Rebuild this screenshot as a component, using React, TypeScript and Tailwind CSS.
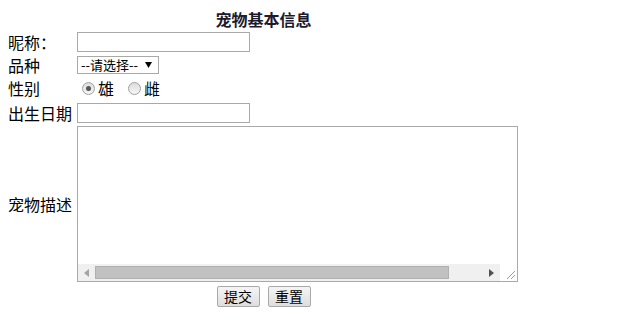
import React from "react";

const font = { fontFamily: '"Noto Sans CJK SC", "Liberation Sans", sans-serif' };

function Radio({ checked }: { checked?: boolean }) {
  return (
    <span className="w-[13px] h-[13px] rounded-full border border-[#a0a0a0] bg-gradient-to-b from-[#dcdcdc] to-[#f6f6f6] flex items-center justify-center">
      {checked && <span className="w-[5px] h-[5px] rounded-full bg-[#555]" />}
    </span>
  );
}

function Btn({ children }: { children: React.ReactNode }) {
  return (
    <div className="h-[21px] w-[43px] border border-[#a9a9a9] rounded-[2px] bg-gradient-to-b from-[#f5f5f5] to-[#dedede] flex items-center justify-center text-[14px] leading-none text-black">
      {children}
    </div>
  );
}

export default function App() {
  return (
    <div className="w-[627px] h-[334px] bg-white text-black" style={font}>
      <div className="w-[511px] ml-[8px] pt-[8px] flex flex-col">
        {/* Title */}
        <div className="h-[22px] flex items-center justify-center text-[16px] font-bold text-[#1c1a2c] leading-none">
          宠物基本信息
        </div>

        {/* 昵称 */}
        <div className="h-[23px] flex items-center">
          <div className="w-[69px] text-[16px] leading-none">昵称：</div>
          <div className="w-[173px] h-[20px] border border-[#a9a9a9] bg-white" />
        </div>

        {/* 品种 */}
        <div className="h-[23px] flex items-center">
          <div className="w-[69px] text-[16px] leading-none">品种</div>
          <div className="w-[82px] h-[18px] border border-[#a9a9a9] bg-white flex items-center pl-[3px] pr-[6px] text-[13px] leading-none">
            <span>--请选择--</span>
            <svg className="ml-auto" width="7" height="6" viewBox="0 0 7 6">
              <path d="M0 0 L7 0 L3.5 6 Z" fill="#000" />
            </svg>
          </div>
        </div>

        {/* 性别 */}
        <div className="h-[24px] flex items-center">
          <div className="w-[69px] text-[16px] leading-none">性别</div>
          <div className="flex items-center pl-[5px] text-[16px] leading-none">
            <Radio checked />
            <span className="ml-[3px]">雄</span>
            <span className="ml-[14px]"><Radio /></span>
            <span className="ml-[3px]">雌</span>
          </div>
        </div>

        {/* 出生日期 */}
        <div className="h-[25px] flex items-center">
          <div className="w-[69px] text-[16px] leading-none">出生日期</div>
          <div className="w-[173px] h-[20px] border border-[#a9a9a9] bg-white" />
        </div>

        {/* 宠物描述 */}
        <div className="h-[158px] flex items-center">
          <div className="w-[69px] text-[16px] leading-none">宠物描述</div>
          <div className="w-[441px] h-[156px] border border-[#a9a9a9] bg-white flex flex-col">
            <div className="flex-1" />
            <div className="h-[17px] flex bg-[#f0f0f0]">
              <div className="w-[17px] flex items-center justify-center">
                <svg width="5" height="8" viewBox="0 0 5 8"><path d="M5 0 L0 4 L5 8 Z" fill="#a3a3a3" /></svg>
              </div>
              <div className="flex-1 flex items-center">
                <div className="w-[354px] h-[13px] bg-[#c1c1c1] border border-[#b0b0b0]" />
              </div>
              <div className="w-[17px] flex items-center justify-center">
                <svg width="5" height="8" viewBox="0 0 5 8"><path d="M0 0 L5 4 L0 8 Z" fill="#505050" /></svg>
              </div>
              <div className="w-[17px] bg-white flex items-end justify-end p-[2px]">
                <svg width="9" height="9" viewBox="0 0 9 9">
                  <path d="M1 9 L9 1 M5 9 L9 5" stroke="#9a9a9a" strokeWidth="1" />
                </svg>
              </div>
            </div>
          </div>
        </div>

        {/* Buttons */}
        <div className="h-[26px] flex items-center justify-center gap-[8px]">
          <Btn>提交</Btn>
          <Btn>重置</Btn>
        </div>
      </div>
    </div>
  );
}
